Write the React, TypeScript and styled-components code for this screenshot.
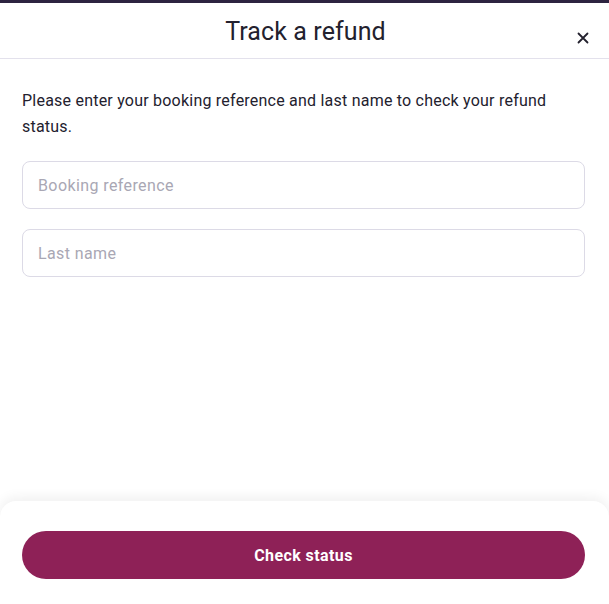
import React, { useState } from 'react';
import styled, { createGlobalStyle } from 'styled-components';

const GlobalStyle = createGlobalStyle`
    * {
        box-sizing: border-box;
    }

    body {
        margin: 0;
        font-family: Roboto, 'Liberation Sans', sans-serif;
        color: #23212e;
        background: #ffffff;
    }
`;

const Page = styled.div`
    min-height: 100vh;
    display: flex;
    flex-direction: column;
    border-top: 3px solid #2d2340;
`;

const Header = styled.header`
    height: 56px;
    display: grid;
    grid-template-columns: 1fr auto 1fr;
    padding: 14px 20px 0 22px;
    border-bottom: 1px solid #e3e1ec;
`;

const Title = styled.h1`
    grid-column: 2;
    margin: 0;
    font-size: 25px;
    line-height: 29px;
    font-weight: 400;
    letter-spacing: 0.1px;
    color: #23212e;
`;

const CloseButton = styled.button`
    grid-column: 3;
    justify-self: end;
    width: 12px;
    height: 12px;
    margin-top: 15px;
    padding: 0;
    border: none;
    background: none;
    cursor: pointer;
    display: flex;
`;

const Body = styled.main`
    padding: 29px 24px 0 22px;
    display: flex;
    flex-direction: column;
    gap: 20px;
`;

const Intro = styled.p`
    margin: 0 0 1px;
    font-size: 16px;
    line-height: 26px;
    letter-spacing: 0.22px;
    color: #23212e;
`;

const Field = styled.input`
    width: 100%;
    height: 48px;
    padding: 0 15px;
    border: 1px solid #dcdae6;
    border-radius: 8px;
    font-family: inherit;
    font-size: 16px;
    letter-spacing: 0.4px;
    color: #23212e;
    outline: none;

    &::placeholder {
        color: #a9a7b4;
    }
`;

const Footer = styled.footer`
    margin-top: auto;
    height: 103px;
    padding: 30px 24px 0 22px;
    border-radius: 16px 16px 0 0;
    background: #ffffff;
    box-shadow: 0 -4px 12px rgba(0, 0, 0, 0.06);
`;

const SubmitButton = styled.button`
    width: 100%;
    height: 48px;
    border: none;
    border-radius: 24px;
    background: #8e2157;
    color: #ffffff;
    font-family: inherit;
    font-size: 16px;
    font-weight: 700;
    letter-spacing: 0.4px;
    cursor: pointer;
`;

const App = () => {
    const [reference, setReference] = useState('');
    const [lastName, setLastName] = useState('');

    return (
        <>
            <GlobalStyle />
            <Page>
                <Header>
                    <Title>Track a refund</Title>
                    <CloseButton aria-label="Close">
                        <svg width="12" height="12" viewBox="0 0 12 12">
                            <path
                                d="M1.5 1.5l9 9M10.5 1.5l-9 9"
                                stroke="#23212e"
                                strokeWidth="1.8"
                                strokeLinecap="round"
                            />
                        </svg>
                    </CloseButton>
                </Header>
                <Body>
                    <Intro>
                        Please enter your booking reference and last name to check your refund
                        status.
                    </Intro>
                    <Field
                        placeholder="Booking reference"
                        value={reference}
                        onChange={(e) => setReference(e.target.value)}
                    />
                    <Field
                        placeholder="Last name"
                        value={lastName}
                        onChange={(e) => setLastName(e.target.value)}
                    />
                </Body>
                <Footer>
                    <SubmitButton>Check status</SubmitButton>
                </Footer>
            </Page>
        </>
    );
};

export default App;
